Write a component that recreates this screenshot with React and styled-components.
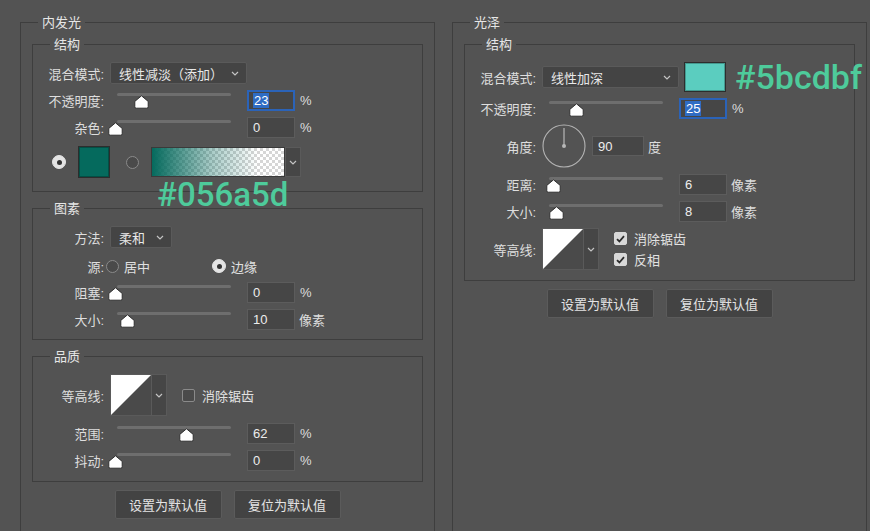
import React from 'react';
import styled, { createGlobalStyle } from 'styled-components';

const Global = createGlobalStyle`
  html, body { margin: 0; padding: 0; background: #535353; overflow: hidden; }
  body {
    font-family: "Liberation Sans", "Noto Sans CJK SC", sans-serif;
    font-size: 13px;
    color: #e0e0e0;
  }
  * { box-sizing: border-box; }
`;

const Page = styled.div`
  display: flex;
  gap: 17px;
  padding: 14px 0 0 20px;
  height: 531px;
`;

const Column = styled.div`
  width: 415px;
  flex: none;
`;

const OuterGroup = styled.fieldset`
  margin: 0;
  min-width: 0;
  width: 415px;
  height: 517px;
  border: 1px solid #3e3e3e;
  border-bottom: none;
  padding: 5px 11px 0;
`;

const Group = styled.fieldset`
  margin: 0;
  min-width: 0;
  border: 1px solid #3e3e3e;
  padding: 9px 11px ${p => p.$pb || 10}px;
  & + & { margin-top: 8px; }
`;

const Legend = styled.legend`
  padding: 0 4px;
  margin-left: 6px;
  font-size: 13px;
  line-height: 17px;
  color: #e6e6e6;
`;

const Row = styled.div`
  display: flex;
  align-items: center;
  height: ${p => p.$h}px;
  margin-top: ${p => p.$mt || 0}px;
`;

const Label = styled.span`
  width: 60px;
  flex: none;
  text-align: right;
  margin-right: 6px;
  white-space: nowrap;
  color: #dedede;
`;

const SelectBox = styled.div`
  width: ${p => p.$w}px;
  height: 22px;
  flex: none;
  display: flex;
  align-items: center;
  justify-content: space-between;
  padding: 0 7px 0 8px;
  background: #444444;
  border: 1px solid #5a5a5a;
  border-radius: 2px;
  color: #e8e8e8;
  white-space: nowrap;
`;

const ChevronSvg = styled.svg`
  width: 8px;
  height: 5px;
  flex: none;
`;

const Chevron = () => (
  <ChevronSvg viewBox="0 0 8 5">
    <path d="M1 1 L4 4 L7 1" fill="none" stroke="#c4c4c4" strokeWidth="1.2" />
  </ChevronSvg>
);

const SliderBox = styled.div`
  position: relative;
  width: 128px;
  height: 100%;
  flex: none;
  margin-right: 9px;
`;

const Track = styled.div`
  position: absolute;
  left: 7px;
  right: 7px;
  top: 3px;
  height: 3px;
  border-radius: 2px;
  background: #6e6e6e;
`;

const ThumbSvg = styled.svg`
  position: absolute;
  top: 5px;
  width: 15px;
  height: 14px;
`;

const Slider = ({ pct }) => (
  <SliderBox>
    <Track />
    <ThumbSvg viewBox="0 0 15 14" style={{ left: `${pct * 114 - 2.5}px` }}>
      <path
        d="M7.5 0.8 L14.2 6.4 L14.2 11.8 Q14.2 13.2 12.8 13.2 L2.2 13.2 Q0.8 13.2 0.8 11.8 L0.8 6.4 Z"
        fill="#ffffff"
        stroke="#2f2f2f"
        strokeWidth="1"
      />
    </ThumbSvg>
  </SliderBox>
);

const Field = styled.div`
  width: ${p => p.$w || 48}px;
  height: 100%;
  flex: none;
  display: flex;
  align-items: center;
  padding-left: ${p => (p.$focus ? 4 : 5)}px;
  background: #464646;
  border: ${p => (p.$focus ? '2px solid #2b63b8' : '1px solid #5c5c5c')};
  color: #ededed;
  font-size: 13px;
`;

const Selected = styled.span`
  background: #2f6cc4;
  color: #ffffff;
  line-height: 15px;
  padding: 0 1px;
`;

const Unit = styled.span`
  margin-left: ${p => p.$ml || 5}px;
  color: #dedede;
`;

const RadioDot = styled.span`
  width: ${p => (p.$on ? 14 : 13)}px;
  height: ${p => (p.$on ? 14 : 13)}px;
  flex: none;
  border-radius: 50%;
  margin-left: ${p => p.$ml || 0}px;
  background: ${p => (p.$on ? '#e4e4e4' : '#4a4a4a')};
  border: 1px solid ${p => (p.$on ? '#e4e4e4' : '#8a8a8a')};
  display: flex;
  align-items: center;
  justify-content: center;
  &::after {
    content: '';
    width: 5px;
    height: 5px;
    border-radius: 50%;
    background: #333;
    display: ${p => (p.$on ? 'block' : 'none')};
  }
`;

const Swatch = styled.div`
  width: ${p => p.$w}px;
  height: ${p => p.$h}px;
  flex: none;
  margin-left: ${p => p.$ml || 0}px;
  margin-right: ${p => p.$mr || 0}px;
  background: ${p => p.$c};
  border: 1px solid #2d2d2d;
  box-shadow: inset 0 0 0 1px rgba(0, 0, 0, 0.25);
`;

const GradientWrap = styled.div`
  position: relative;
  display: flex;
  height: 30px;
  margin-left: 12px;
`;

const GradientBar = styled.div`
  width: 134px;
  height: 100%;
  border: 1px solid #3a3a3a;
  background-image: linear-gradient(to right, #056a5d 0%, rgba(5, 106, 93, 0.35) 45%, rgba(5, 106, 93, 0) 80%),
    conic-gradient(#ffffff 25%, #d6d6d6 0 50%, #ffffff 0 75%, #d6d6d6 0);
  background-size: 100% 100%, 6px 6px;
`;

const DropStrip = styled.div`
  width: ${p => p.$w || 16}px;
  height: 100%;
  flex: none;
  display: flex;
  align-items: center;
  justify-content: center;
  background: #464646;
  border: 1px solid #5a5a5a;
`;

const Annotation = styled.span`
  font-family: Roboto, "Noto Sans", sans-serif;
  font-weight: 500;
  color: #4ecb9b;
  white-space: nowrap;
  font-size: ${p => p.$size}px;
  line-height: ${p => p.$lh}px;
`;

const FloatingAnnotation = styled(Annotation)`
  position: absolute;
  left: 6px;
  top: 31px;
`;

const RadioOption = styled.label`
  display: flex;
  align-items: center;
  width: ${p => (p.$w ? `${p.$w}px` : 'auto')};
  margin-left: ${p => p.$ml || 0}px;
  gap: 5px;
`;

const ContourBox = styled.div`
  display: flex;
  height: 42px;
  flex: none;
  border: 1px solid #5a5a5a;
  background: #464646;
`;

const ContourSvg = styled.svg`
  width: 40px;
  height: 40px;
  display: block;
`;

const ContourStrip = styled(DropStrip)`
  width: 15px;
  border: none;
  border-left: 1px solid #5a5a5a;
`;

const Contour = () => (
  <ContourBox>
    <ContourSvg viewBox="0 0 40 40">
      <rect width="40" height="40" fill="#4a4a4a" />
      <path d="M0 0 H40 L0 40 Z" fill="#ffffff" />
    </ContourSvg>
    <ContourStrip>
      <Chevron />
    </ContourStrip>
  </ContourBox>
);

const CheckCol = styled.div`
  display: flex;
  flex-direction: column;
  margin-left: ${p => p.$ml}px;
`;

const CheckItem = styled.label`
  display: flex;
  align-items: center;
  height: 21px;
  gap: 7px;
  color: #e2e2e2;
`;

const Box = styled.span`
  width: 13px;
  height: 13px;
  flex: none;
  border-radius: 2px;
  background: ${p => (p.$on ? '#d8d8d8' : '#4a4a4a')};
  border: 1px solid ${p => (p.$on ? '#d8d8d8' : '#8a8a8a')};
  display: flex;
  align-items: center;
  justify-content: center;
`;

const Check = ({ on, children }) => (
  <CheckItem>
    <Box $on={on}>
      {on && (
        <svg width="9" height="8" viewBox="0 0 9 8">
          <path d="M1 4.2 L3.4 6.5 L8 1.2" fill="none" stroke="#2b2b2b" strokeWidth="1.8" />
        </svg>
      )}
    </Box>
    {children}
  </CheckItem>
);

const DialSvg = styled.svg`
  width: 44px;
  height: 44px;
  flex: none;
  margin-right: 6px;
`;

const Dial = () => (
  <DialSvg viewBox="0 0 44 44">
    <circle cx="22" cy="22" r="21" fill="none" stroke="#b4b4b4" strokeWidth="1.1" />
    <line x1="22" y1="22" x2="22" y2="4" stroke="#c2c2c2" strokeWidth="1.1" />
    <circle cx="22" cy="22" r="2" fill="#b8b8b8" />
  </DialSvg>
);

const AngleField = styled(Field)`
  height: 20px;
`;

const Buttons = styled.div`
  display: flex;
  justify-content: center;
  gap: 12px;
  margin-top: 8px;
`;

const Button = styled.button`
  width: 107px;
  height: 29px;
  background: #434343;
  border: 1px solid #5b5b5b;
  border-radius: 2px;
  color: #e4e4e4;
  font-family: "Liberation Sans", "Noto Sans CJK SC", sans-serif;
  font-size: 13px;
  padding: 0;
`;

export default function App() {
  return (
    <>
      <Global />
      <Page>
        <Column>
          <OuterGroup>
            <Legend>内发光</Legend>
            <Group $pb={13}>
              <Legend>结构</Legend>
              <Row $h={22}>
                <Label>混合模式:</Label>
                <SelectBox $w={137}>
                  <span>线性减淡（添加）</span>
                  <Chevron />
                </SelectBox>
              </Row>
              <Row $h={21} $mt={6}>
                <Label>不透明度:</Label>
                <Slider pct={0.23} />
                <Field $focus>
                  <Selected>23</Selected>
                </Field>
                <Unit>%</Unit>
              </Row>
              <Row $h={21} $mt={6}>
                <Label>杂色:</Label>
                <Slider pct={0} />
                <Field>0</Field>
                <Unit>%</Unit>
              </Row>
              <Row $h={32} $mt={8}>
                <RadioDot $on $ml={8} />
                <Swatch $w={32} $h={32} $c="#056a5d" $ml={12} />
                <RadioDot $ml={16} />
                <GradientWrap>
                  <GradientBar />
                  <DropStrip>
                    <Chevron />
                  </DropStrip>
                  <FloatingAnnotation $size={33} $lh={33}>#056a5d</FloatingAnnotation>
                </GradientWrap>
              </Row>
            </Group>
            <Group $pb={9}>
              <Legend>图素</Legend>
              <Row $h={22}>
                <Label>方法:</Label>
                <SelectBox $w={62}>
                  <span>柔和</span>
                  <Chevron />
                </SelectBox>
              </Row>
              <Row $h={20} $mt={8}>
                <Label>源:</Label>
                <RadioOption $w={106} $ml={-4}>
                  <RadioDot />
                  <span>居中</span>
                </RadioOption>
                <RadioOption>
                  <RadioDot $on />
                  <span>边缘</span>
                </RadioOption>
              </Row>
              <Row $h={21} $mt={6}>
                <Label>阻塞:</Label>
                <Slider pct={0} />
                <Field>0</Field>
                <Unit>%</Unit>
              </Row>
              <Row $h={21} $mt={6}>
                <Label>大小:</Label>
                <Slider pct={0.11} />
                <Field>10</Field>
                <Unit $ml={4}>像素</Unit>
              </Row>
            </Group>
            <Group $pb={10}>
              <Legend>品质</Legend>
              <Row $h={42}>
                <Label>等高线:</Label>
                <Contour />
                <CheckCol $ml={15}>
                  <Check>消除锯齿</Check>
                </CheckCol>
              </Row>
              <Row $h={21} $mt={7}>
                <Label>范围:</Label>
                <Slider pct={0.63} />
                <Field>62</Field>
                <Unit>%</Unit>
              </Row>
              <Row $h={21} $mt={6}>
                <Label>抖动:</Label>
                <Slider pct={0} />
                <Field>0</Field>
                <Unit>%</Unit>
              </Row>
            </Group>
            <Buttons>
              <Button>设置为默认值</Button>
              <Button>复位为默认值</Button>
            </Buttons>
          </OuterGroup>
        </Column>
        <Column>
          <OuterGroup>
            <Legend>光泽</Legend>
            <Group $pb={10}>
              <Legend>结构</Legend>
              <Row $h={30}>
                <Label>混合模式:</Label>
                <SelectBox $w={137}>
                  <span>线性加深</span>
                  <Chevron />
                </SelectBox>
                <Swatch $w={42} $h={30} $c="#5bcdbf" $ml={5} $mr={9} />
                <Annotation $size={34} $lh={30}>#5bcdbf</Annotation>
              </Row>
              <Row $h={21} $mt={6}>
                <Label>不透明度:</Label>
                <Slider pct={0.26} />
                <Field $focus>
                  <Selected>25</Selected>
                </Field>
                <Unit>%</Unit>
              </Row>
              <Row $h={44} $mt={5}>
                <Label>角度:</Label>
                <Dial />
                <AngleField $w={52}>90</AngleField>
                <Unit $ml={4}>度</Unit>
              </Row>
              <Row $h={21} $mt={6}>
                <Label>距离:</Label>
                <Slider pct={0.053} />
                <Field>6</Field>
                <Unit $ml={4}>像素</Unit>
              </Row>
              <Row $h={21} $mt={6}>
                <Label>大小:</Label>
                <Slider pct={0.085} />
                <Field>8</Field>
                <Unit $ml={4}>像素</Unit>
              </Row>
              <Row $h={42} $mt={6}>
                <Label>等高线:</Label>
                <Contour />
                <CheckCol $ml={15}>
                  <Check on>消除锯齿</Check>
                  <Check on>反相</Check>
                </CheckCol>
              </Row>
            </Group>
            <Buttons>
              <Button>设置为默认值</Button>
              <Button>复位为默认值</Button>
            </Buttons>
          </OuterGroup>
        </Column>
      </Page>
    </>
  );
}
